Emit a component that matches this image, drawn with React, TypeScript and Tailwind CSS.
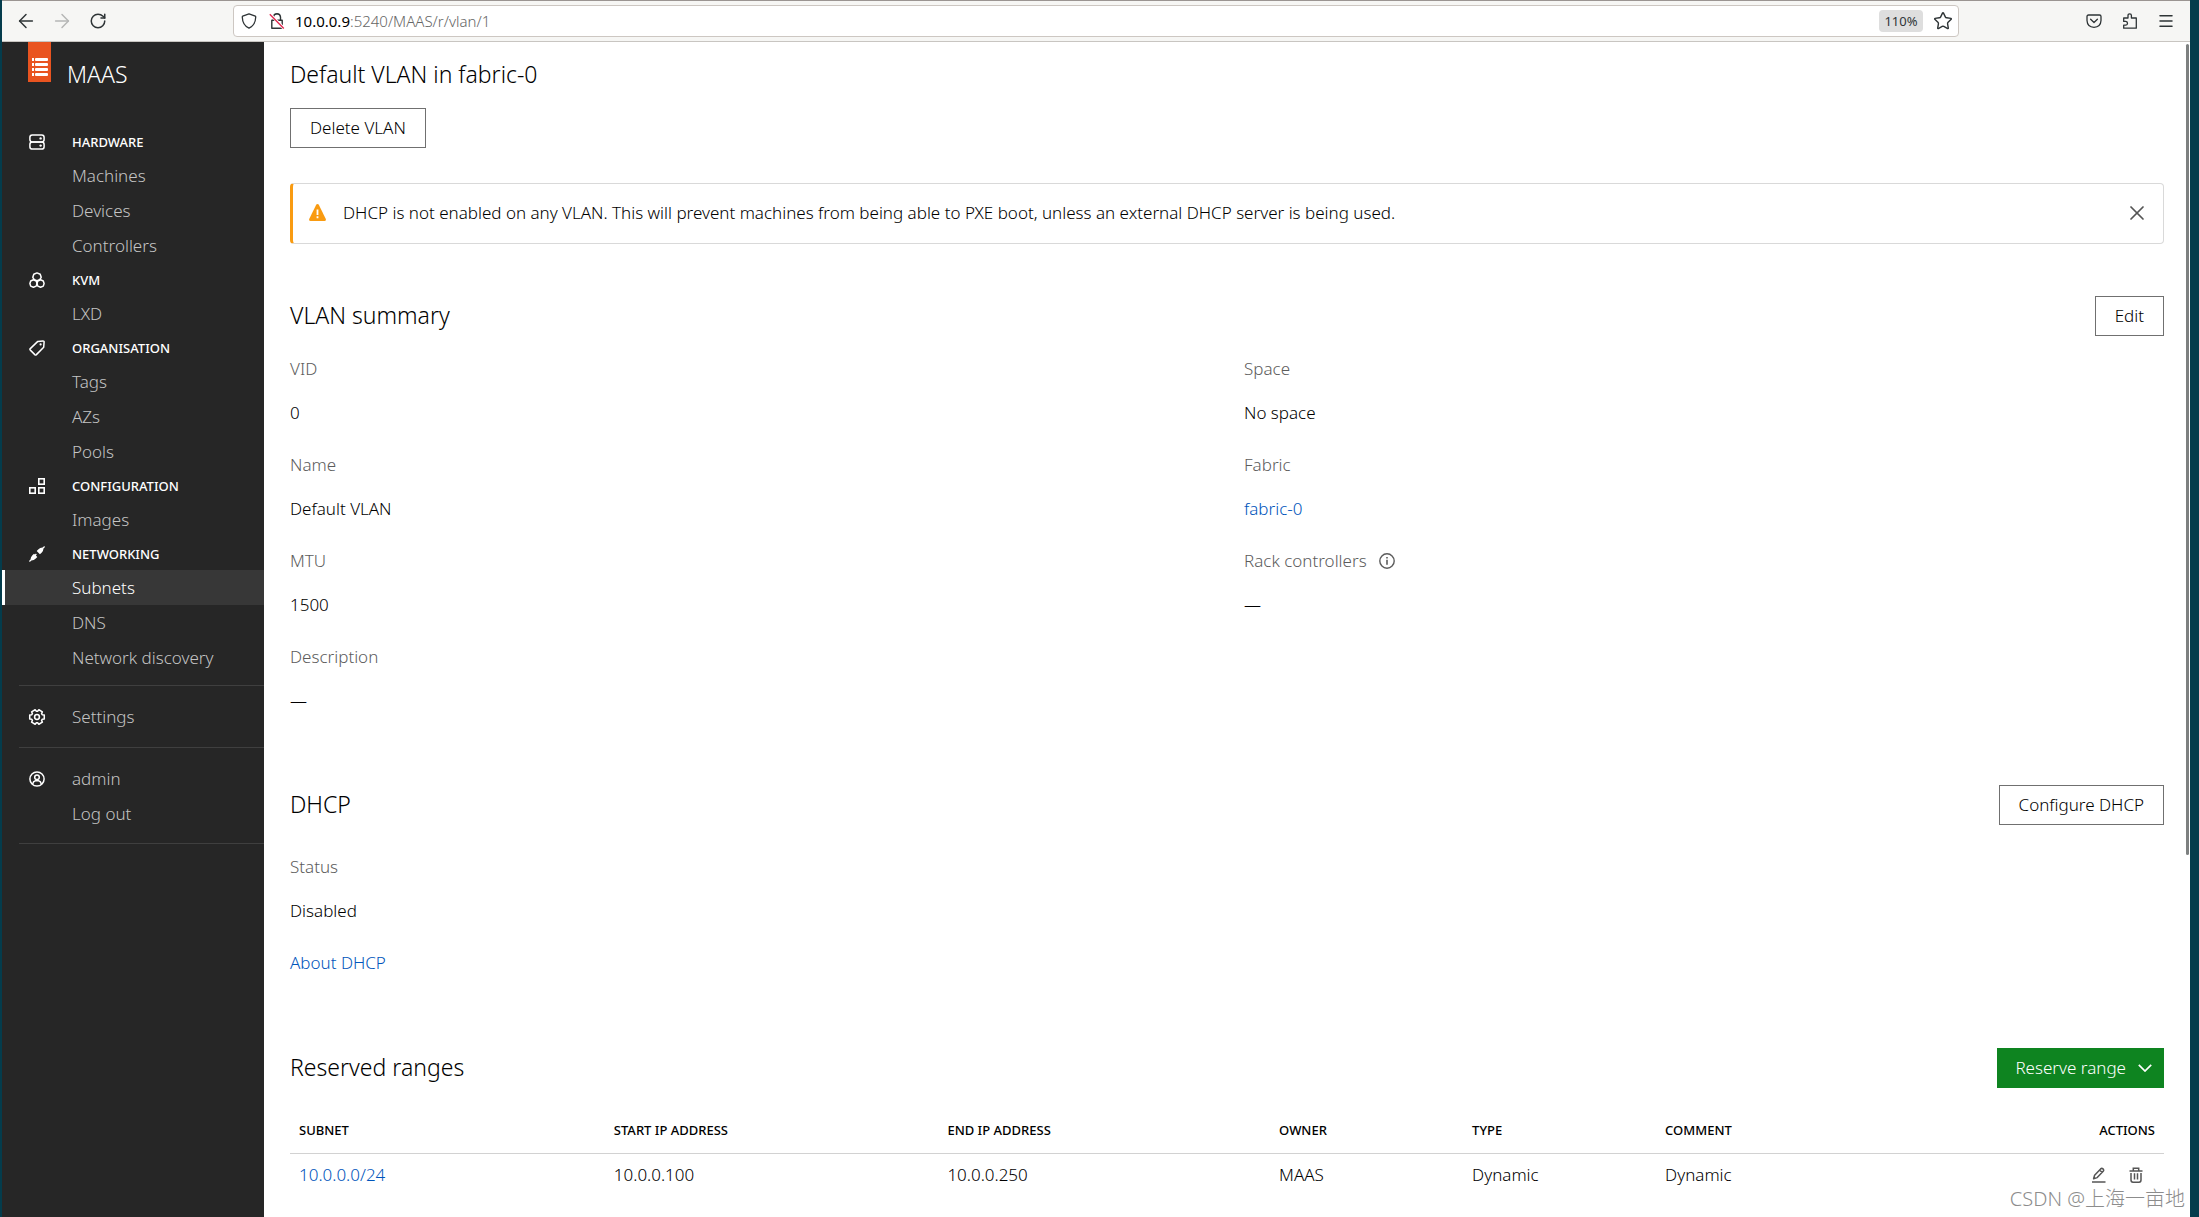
import React from 'react';
import { ArrowLeft, ArrowRight, Menu, RotateCw, Star, X } from 'lucide-react';

interface NavGroup {
  title: string;
  icon: React.ReactNode;
  links: string[];
}

const HardwareIcon = () => (
  <svg viewBox="0 0 16 16" className="h-4 w-4" fill="none" stroke="currentColor" strokeWidth="1.5">
    <rect x="0.9" y="0.9" width="14.2" height="7.1" rx="2.4" />
    <rect x="0.9" y="8" width="14.2" height="7.1" rx="2.4" />
    <circle cx="11.6" cy="4.4" r="1.2" fill="currentColor" stroke="none" />
    <circle cx="11.6" cy="11.6" r="1.2" fill="currentColor" stroke="none" />
  </svg>
);

const KvmIcon = () => (
  <svg viewBox="0 0 16 16" className="h-4 w-4" fill="none" stroke="currentColor" strokeWidth="1.5" strokeLinejoin="round">
    <path d="M8 .9 11.2 2.3 12.2 5.3 10.6 7.8 8 8.6 5.4 7.8 3.8 5.3 4.8 2.3Z" />
    <path d="M4.4 7.8 7.2 9 8 11.5 7.2 14.1 4.4 15.2 1.7 14.1.9 11.5 1.7 9Z" />
    <path d="M11.6 7.8 14.3 9 15.1 11.5 14.3 14.1 11.6 15.2 8.8 14.1 8 11.5 8.8 9Z" />
  </svg>
);

const TagIcon = () => (
  <svg viewBox="0 0 16 16" className="h-4 w-4" fill="none" stroke="currentColor" strokeWidth="1.5" strokeLinejoin="round">
    <path d="M8.8 1.4 14 .9Q15.2.9 15.1 2L14.7 7.2 7.4 14.6Q6.6 15.3 5.8 14.6L1.3 10.1Q.6 9.3 1.3 8.6Z" />
    <circle cx="11.6" cy="4.4" r="1.1" fill="currentColor" stroke="none" />
  </svg>
);

const ConfigIcon = () => (
  <svg viewBox="0 0 16 16" className="h-4 w-4" fill="none" stroke="currentColor" strokeWidth="1.6">
    <rect x="9.8" y="0.8" width="5.4" height="5.4" />
    <rect x="0.8" y="9.8" width="5.4" height="5.4" />
    <rect x="9.8" y="9.8" width="5.4" height="5.4" />
  </svg>
);

const NetworkIcon = () => (
  <svg viewBox="0 0 16 16" className="h-4 w-4" fill="currentColor">
    <path d="M15.2 0 16 .9 14.5 2.5Q14.4 5 12.6 6.8L10.9 8.3 7.7 5.1 9.2 3.4Q11 1.6 13.6 1.5Z" />
    <path d="M.8 16 0 15.1 1.5 13.5Q1.6 11 3.4 9.2L5 7.7 5.9 8.6 6.9 7.6 7.8 8.5 6.9 9.5 8.3 10.9 6.8 12.6Q5 14.4 2.4 14.5Z" />
  </svg>
);

const SettingsIcon = () => (
  <svg viewBox="0 0 24 24" className="h-4 w-4 overflow-visible" fill="none" stroke="currentColor" strokeWidth="2.3" strokeLinejoin="round">
    <path d="M22.9 9V15L19.8 15.5 18.9 17 20.1 19.8 14.8 22.9 12.9 20.5H11.1L9.2 22.9 3.9 19.8 5.1 17 4.2 15.5 1.1 15V9L4.2 8.5 5.1 7 3.9 4.2 9.2 1.1 11.1 3.5H12.9L14.8 1.1 20.1 4.2 18.9 7 19.8 8.5Z" />
    <circle cx="12" cy="12" r="3.6" />
  </svg>
);

const UserIcon = () => (
  <svg viewBox="0 0 16 16" className="h-4 w-4" fill="none" stroke="currentColor" strokeWidth="1.5">
    <circle cx="8" cy="8" r="7.1" />
    <circle cx="8" cy="6.3" r="2.3" />
    <path d="M3.6 13.3 4.6 10.8 6.5 9.7H9.5L11.4 10.8 12.4 13.3" />
  </svg>
);

const ShieldIcon = () => (
  <svg viewBox="0 0 16 16" className="h-4 w-4" fill="none" stroke="currentColor" strokeWidth="1.3" strokeLinejoin="round">
    <path d="M8 .8 14.3 3.2Q14.8 3.4 14.7 4.2 14.5 12 8 15.2 1.5 12 1.3 4.2 1.2 3.4 1.7 3.2Z" />
  </svg>
);

const InsecureIcon = () => (
  <svg viewBox="0 0 16 16" className="h-4 w-4" fill="none" strokeWidth="1.4">
    <path d="M4.5 6.5V4Q4.7.9 8 .8 11.2.9 11.5 4V6.5M2.8 7.2H13.2V15.2H2.8Z" stroke="#2e3436" strokeLinejoin="round" />
    <path d="M1.2 1.2 14.8 15.4" stroke="#fff" strokeWidth="3" />
    <path d="M.8 1.2 14.8 15.5" stroke="#e22850" />
  </svg>
);

const PocketIcon = () => (
  <svg viewBox="0 0 16 16" className="h-4 w-4" fill="none" stroke="currentColor" strokeWidth="1.3" strokeLinecap="round" strokeLinejoin="round">
    <path d="M2.5 2H13.5Q15 2 15 3.5V7.5Q14.7 14 8 14.3 1.3 14 1 7.5V3.5Q1 2 2.5 2Z" />
    <path d="M4.6 6.3 8 9.5 11.4 6.3" />
  </svg>
);

const ExtensionIcon = () => (
  <svg viewBox="0 0 16 16" className="h-4 w-4" fill="none" stroke="currentColor" strokeWidth="1.3" strokeLinejoin="round">
    <path d="M1.7 5H6V2.5Q6 .8 7.7.8 9.4.8 9.4 2.5V5H14.3V15.2H1.7V12.2H3.8Q5.5 12 5.5 10.3 5.5 8.6 3.8 8.4H1.7Z" />
  </svg>
);

const WarningIcon = () => (
  <svg viewBox="0 0 17 17" className="h-[17px] w-[17px] shrink-0">
    <path d="M8.5 0Q9.3 0 9.8.8L16.8 15Q17.2 17 15.5 17H1.5Q-.2 17 .2 15L7.2.8Q7.7 0 8.5 0Z" fill="#f99b11" />
    <path d="M7.6 5.5H9.4V11H7.6ZM7.6 12.3H9.4V14.3H7.6Z" fill="#fff" />
  </svg>
);

const InfoIcon = () => (
  <svg viewBox="0 0 16 16" className="h-4 w-4" fill="none" stroke="currentColor" strokeWidth="1.4">
    <circle cx="8" cy="8" r="7.2" />
    <path d="M8 6.8V11.8M8 4V5.5" strokeWidth="1.6" />
  </svg>
);

const EditIcon = () => (
  <svg viewBox="0 0 16 16" className="h-4 w-4" fill="none" stroke="currentColor" strokeWidth="1.5">
    <path d="M2.6 11.8 3.6 8.3 9.6 1.9Q10.8.9 12 1.9 13.2 3.1 12.2 4.3L6.2 10.6ZM8.6 3 11.2 5.5" strokeLinejoin="round" />
    <path d="M1 15H14.5" />
  </svg>
);

const TrashIcon = () => (
  <svg viewBox="0 0 16 16" className="h-4 w-4" fill="none" stroke="currentColor" strokeWidth="1.5">
    <path d="M1.5 4H14.5M5.3 4V1.3H10.7V4M3 6V13Q3 15.2 5 15.2H11Q13 15.2 13 13V6M6.5 6.3V12.6M9.5 6.3V12.6" />
  </svg>
);

const ChevronIcon = () => (
  <svg viewBox="0 0 14 8" className="h-2 w-3.5" fill="none" stroke="currentColor" strokeWidth="1.7">
    <path d="M.8.8 7 7 13.2.8" />
  </svg>
);

const LogoIcon = () => (
  <svg viewBox="0 0 23 40" className="h-10 w-[23px]">
    <rect width="23" height="40" fill="#e95420" />
    {[17, 22, 27, 32].map((y) => (
      <g key={y} fill="#fff">
        <rect x="4" y={y - 1} width="2" height="3" />
        <rect x="7" y={y - 1} width="13" height="3" rx="1" />
      </g>
    ))}
  </svg>
);

const navGroups: NavGroup[] = [
  { title: 'Hardware', icon: <HardwareIcon />, links: ['Machines', 'Devices', 'Controllers'] },
  { title: 'KVM', icon: <KvmIcon />, links: ['LXD'] },
  { title: 'Organisation', icon: <TagIcon />, links: ['Tags', 'AZs', 'Pools'] },
  { title: 'Configuration', icon: <ConfigIcon />, links: ['Images'] },
  { title: 'Networking', icon: <NetworkIcon />, links: ['Subnets', 'DNS', 'Network discovery'] },
];

const NavLink = ({ label, icon, active }: { label: string; icon?: React.ReactNode; active?: boolean }) => (
  <a
    href="#"
    className={
      active
        ? 'flex h-[35px] items-center border-l-[3px] border-white bg-[#373737] pl-6 text-white'
        : 'flex h-[35px] items-center pl-[27px] text-[#c4c4c4]'
    }
  >
    <span className="flex w-[43px] items-center text-white">{icon}</span>
    {label}
  </a>
);

const Sidebar = () => (
  <aside className="w-[262px] shrink-0 bg-[#262626]">
    <div className="flex h-[83px] gap-4 pl-[26px]">
      <LogoIcon />
      <span className="pt-4 text-[23px] leading-8 text-white">MAAS</span>
    </div>
    <nav>
      {navGroups.map((group) => (
        <div key={group.title}>
          <h2 className="flex h-[33px] items-center pl-[27px] text-[13px] font-medium text-white uppercase">
            <span className="w-[43px]">{group.icon}</span>
            {group.title}
          </h2>
          {group.links.map((link) => (
            <NavLink key={link} label={link} active={link === 'Subnets'} />
          ))}
        </div>
      ))}
      <div className="mt-2.5 ml-[17px] border-t border-[#3f3f3f]" />
      <div className="py-[13px]">
        <NavLink label="Settings" icon={<SettingsIcon />} />
      </div>
      <div className="ml-[17px] border-t border-[#3f3f3f]" />
      <div className="pt-[13px] pb-3">
        <NavLink label="admin" icon={<UserIcon />} />
        <NavLink label="Log out" />
      </div>
      <div className="ml-[17px] border-t border-[#3f3f3f]" />
    </nav>
  </aside>
);

const BarButton = ({ label, children, disabled }: { label: string; children: React.ReactNode; disabled?: boolean }) => (
  <button
    aria-label={label}
    disabled={disabled}
    className="flex h-8 w-9 items-center justify-center disabled:text-[#b5b6b5]"
  >
    {children}
  </button>
);

const BrowserBar = () => (
  <header className="flex h-[42px] items-center border-t border-b border-t-[#9b9592] border-b-[#c8c5c1] bg-[#f6f6f4] text-[#2e3436]">
    <div className="flex w-[231px] shrink-0 items-center pl-1.5">
      <BarButton label="Back"><ArrowLeft className="h-[22px] w-[22px]" strokeWidth={1.6} /></BarButton>
      <BarButton label="Forward" disabled><ArrowRight className="h-[22px] w-[22px]" strokeWidth={1.6} /></BarButton>
      <BarButton label="Reload"><RotateCw className="h-[18px] w-[18px]" strokeWidth={2} /></BarButton>
    </div>
    <div className="flex h-8 flex-1 items-center rounded border border-[#cdc7c2] bg-white pr-[5px] pl-[7px]">
      <ShieldIcon />
      <span className="ml-3"><InsecureIcon /></span>
      <div className="ml-2.5 flex-1 text-[15px] text-[#666]">
        <span className="font-normal text-black">10.0.0.9</span>:5240/MAAS/r/vlan/1
      </div>
      <button className="h-[22px] w-11 rounded bg-[#dedede] text-[13px] leading-5 font-normal">110%</button>
      <button aria-label="Bookmark" className="ml-2.5"><Star className="h-5 w-5" strokeWidth={1.7} /></button>
    </div>
    <div className="flex w-[231px] shrink-0 items-center justify-end pr-1.5">
      <BarButton label="Pocket"><PocketIcon /></BarButton>
      <BarButton label="Extensions"><ExtensionIcon /></BarButton>
      <BarButton label="Menu"><Menu className="h-[18px] w-[18px]" strokeWidth={2} /></BarButton>
    </div>
  </header>
);

const OutlineButton = ({ children }: { children: React.ReactNode }) => (
  <button className="h-10 border border-[#707070] bg-white px-[19px] whitespace-nowrap">{children}</button>
);

const SectionHeader = ({ title, children }: { title: string; children: React.ReactNode }) => (
  <div className="flex h-10 items-center justify-between">
    <h2 className="pb-0.5 text-[23px] leading-8">{title}</h2>
    {children}
  </div>
);

const Definition = ({ term, children }: { term: React.ReactNode; children: React.ReactNode }) => (
  <div className="h-24">
    <dt className="flex h-[26px] items-center gap-3 text-[#5c5c5c]">{term}</dt>
    <dd className="mt-[18px] leading-[26px]">{children}</dd>
  </div>
);

const columns = [
  { label: 'Subnet', width: 'w-[16.8%]' },
  { label: 'Start IP address', width: 'w-[17.8%]' },
  { label: 'End IP address', width: 'w-[17.7%]' },
  { label: 'Owner', width: 'w-[10.3%]' },
  { label: 'Type', width: 'w-[10.3%]' },
  { label: 'Comment', width: 'w-[17%]' },
];

const ReservedRanges = () => (
  <section className="mt-[72px]">
    <SectionHeader title="Reserved ranges">
      <button className="flex h-10 items-center gap-3 bg-[#0e8420] pr-3 pl-[18px] text-white">
        Reserve range
        <ChevronIcon />
      </button>
    </SectionHeader>
    <table className="mt-5 w-full table-fixed text-left">
      <thead>
        <tr className="h-[45px] border-b border-[#d2d2d2] text-[13px] uppercase">
          {columns.map((column) => (
            <th key={column.label} className={`px-[9px] font-medium ${column.width}`}>
              {column.label}
            </th>
          ))}
          <th className="px-[9px] text-right font-medium">Actions</th>
        </tr>
      </thead>
      <tbody>
        <tr className="h-11">
          <td className="px-[9px]"><a href="#" className="text-[#0055bb]">10.0.0.0/24</a></td>
          <td className="px-[9px]">10.0.0.100</td>
          <td className="px-[9px]">10.0.0.250</td>
          <td className="px-[9px]">MAAS</td>
          <td className="px-[9px]">Dynamic</td>
          <td className="px-[9px]">Dynamic</td>
          <td className="pr-5">
            <div className="flex justify-end gap-[21px] text-[#555]">
              <button aria-label="Edit"><EditIcon /></button>
              <button aria-label="Delete"><TrashIcon /></button>
            </div>
          </td>
        </tr>
      </tbody>
    </table>
  </section>
);

export default function App() {
  return (
    <div className="relative flex min-h-screen bg-[#043c4c] pr-[9px] pl-0.5 font-['Noto_Sans','Noto_Sans_CJK_SC',sans-serif] text-[17px] leading-[26px] font-light text-black">
      <div className="flex flex-1 flex-col bg-white">
        <BrowserBar />
        <div className="flex flex-1">
          <Sidebar />
          <main className="flex-1 px-[26px]">
            <h1 className="pt-4 text-[23px] leading-8">Default VLAN in fabric-0</h1>
            <div className="mt-[18px]">
              <OutlineButton>Delete VLAN</OutlineButton>
            </div>

            <div className="mt-[35px] flex h-[61px] items-center rounded border border-l-[3px] border-[#d9d9d9] border-l-[#f99b11] pr-3.5 pb-0.5 pl-4">
              <WarningIcon />
              <p className="ml-[17px] flex-1">
                DHCP is not enabled on any VLAN. This will prevent machines from being able to PXE boot, unless an external DHCP server is being used.
              </p>
              <button aria-label="Close notification" className="text-[#555]">
                <X className="h-6 w-6" strokeWidth={1.7} />
              </button>
            </div>

            <section className="mt-[52px]">
              <SectionHeader title="VLAN summary">
                <OutlineButton>Edit</OutlineButton>
              </SectionHeader>
              <div className="mt-5 grid grid-cols-2 gap-x-[34px]">
                <dl>
                  <Definition term="VID">0</Definition>
                  <Definition term="Name">Default VLAN</Definition>
                  <Definition term="MTU">1500</Definition>
                  <Definition term="Description">—</Definition>
                </dl>
                <dl>
                  <Definition term="Space">No space</Definition>
                  <Definition term="Fabric">
                    <a href="#" className="text-[#0055bb]">fabric-0</a>
                  </Definition>
                  <Definition term={<>Rack controllers <InfoIcon /></>}>—</Definition>
                </dl>
              </div>
            </section>

            <section className="mt-[45px]">
              <SectionHeader title="DHCP">
                <OutlineButton>Configure DHCP</OutlineButton>
              </SectionHeader>
              <dl className="mt-[29px]">
                <Definition term="Status">Disabled</Definition>
              </dl>
              <a href="#" className="block text-[#0055bb]">About DHCP</a>
            </section>

            <ReservedRanges />
          </main>
        </div>
      </div>
      {/* page scrollbar */}
      <div className="absolute top-11 right-2.5 h-[811px] w-[3px] rounded bg-[#7d8080]" />
      <span className="absolute right-3.5 bottom-1 text-[20px] leading-7 text-[#8c8c8c]">CSDN @上海一亩地</span>
    </div>
  );
}
